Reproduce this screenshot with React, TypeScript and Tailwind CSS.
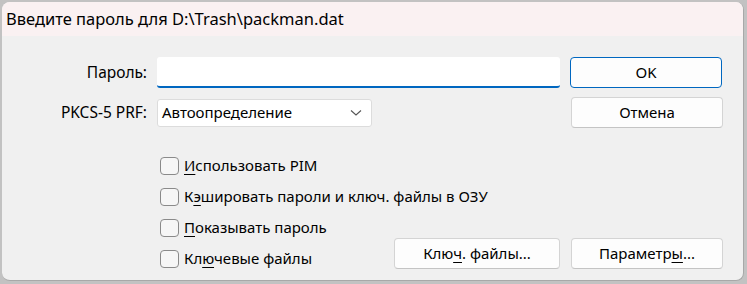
import React from 'react';

const font = { fontFamily: '"Noto Sans", "Open Sans", sans-serif' };

function U({ children }: { children: React.ReactNode }) {
  return <span className="underline underline-offset-[3px] decoration-1">{children}</span>;
}

function Btn({ children, primary, className = '' }: { children: React.ReactNode; primary?: boolean; className?: string }) {
  return (
    <button
      type="button"
      className={`h-[31px] rounded-[4px] bg-[#fdfdfd] text-[15px] text-black ${primary ? 'border border-[#0067c0]' : 'border border-[#d4d4d4] border-b-[#c4c4c4]'} ${className}`}
    >
      {children}
    </button>
  );
}

function Check({ children }: { children: React.ReactNode }) {
  return (
    <label className="flex h-[31px] items-center whitespace-nowrap">
      <span className="h-[18px] w-[19px] shrink-0 rounded-[4px] border border-[#8a8a8a] bg-[#f6f6f6]" />
      <span className="ml-[5px] text-[15px] text-black">{children}</span>
    </label>
  );
}

export default function App() {
  return (
    <div className="h-[284px] w-[747px] bg-[#c2c2c2] pl-[2px] pt-[2px]" style={font}>
      <div className="flex h-[279px] w-[742px] flex-col overflow-hidden rounded-[8px] border-r border-b border-[#a8a8a8] bg-[#f0f0f0]">
        <div className="flex h-[34px] items-center whitespace-nowrap bg-[#faf1f2] pl-[4px] text-[16.5px] text-black">
          Введите пароль для D:\Trash\packman.dat
        </div>

        <div className="flex flex-1 flex-col pr-[20px]">
          <div className="mt-[21px] flex items-center">
            <div className="w-[145px] text-right text-[15.5px]">Пароль:</div>
            <input
              type="password"
              className="ml-[10px] h-[31px] w-[403px] rounded-[3px] border-b-2 border-[#0067c0] bg-white outline-none"
            />
            <Btn primary className="ml-[10px] w-[152px]">OK</Btn>
          </div>

          <div className="mt-[9px] flex items-center">
            <div className="w-[145px] text-right text-[15.5px]">PKCS-5 PRF:</div>
            <div className="ml-[10px] flex h-[28px] w-[215px] items-center justify-between rounded-[3px] border border-[#dcdcdc] bg-white pl-[4px] pr-[9px] text-[15px]">
              <span>Автоопределение</span>
              <svg width="12" height="8" viewBox="0 0 12 8">
                <path d="M1 1.5 L6 6 L11 1.5" fill="none" stroke="#555" strokeWidth="1.1" />
              </svg>
            </div>
            <Btn className="ml-auto w-[152px]">Отмена</Btn>
          </div>

          <div className="flex flex-1 items-end pb-[6px]">
            <div className="ml-[158px] flex w-[230px] flex-col">
              <Check><U>И</U>спользовать PIM</Check>
              <Check>К<U>э</U>шировать пароли и ключ. файлы в ОЗУ</Check>
              <Check><U>П</U>оказывать пароль</Check>
              <Check>Кл<U>ю</U>чевые файлы</Check>
            </div>
            <div className="ml-auto flex gap-[11px] pb-[5px]">
              <Btn className="w-[166px]">Клю<U>ч</U>. файлы...</Btn>
              <Btn className="w-[152px]">Параметр<U>ы</U>...</Btn>
            </div>
          </div>
        </div>
      </div>
    </div>
  );
}
